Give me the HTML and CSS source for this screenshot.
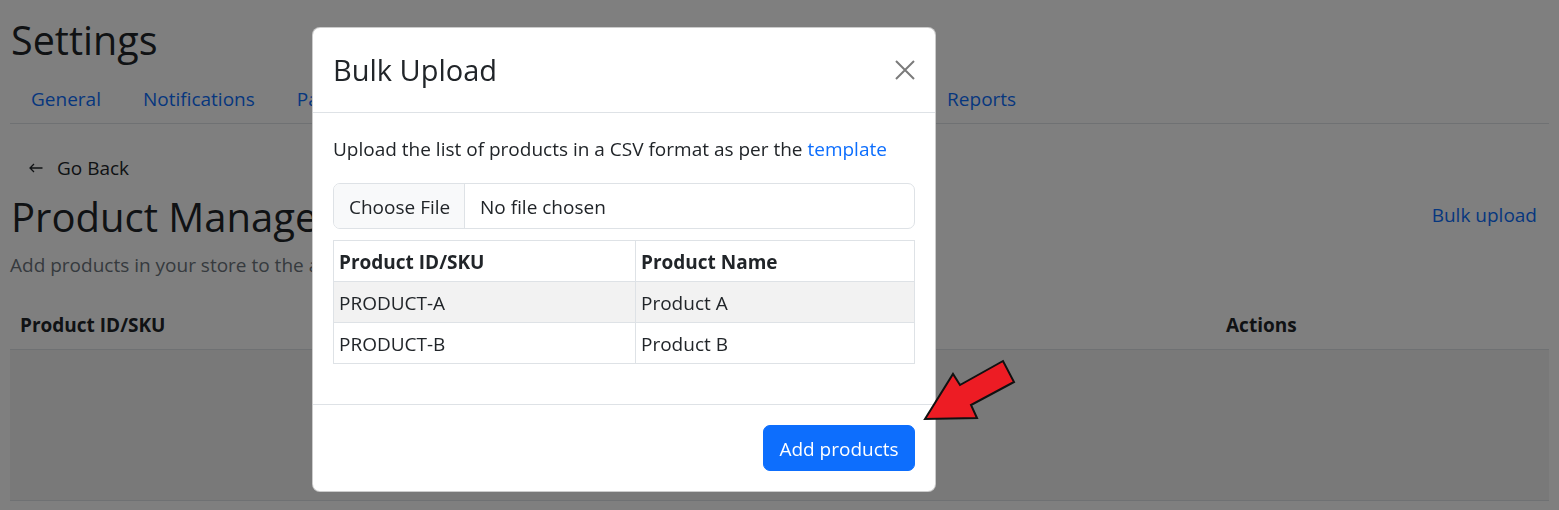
FILE: index.html
```html
<!DOCTYPE html>
<html lang="en">
<head>
<meta charset="utf-8">
<title>Settings – Product Management</title>
<link rel="stylesheet" href="styles.css">
</head>
<body>
<div class="page">
  <h1 class="page-title">Settings</h1>
  <nav class="tabs">
    <a class="tab" href="#">General</a>
    <a class="tab" href="#">Notifications</a>
    <a class="tab" href="#">Payments</a>
    <a class="tab" href="#">Products</a>
    <a class="tab" href="#">Customers</a>
    <a class="tab" href="#">Integrations</a>
    <a class="tab" href="#">Delivery</a>
    <a class="tab" href="#">Reports</a>
  </nav>

  <a class="back" href="#">
    <svg class="back-icon" width="14" height="10" viewBox="0 0 14 10" aria-hidden="true"><path d="M13.5 5H1M5 1L1 5l4 4" fill="none" stroke="#212529" stroke-width="1.3"/></svg>
    <span>Go Back</span>
  </a>

  <div class="heading-row">
    <h2 class="section-title">Product Management</h2>
    <a class="link-btn" href="#">Bulk upload</a>
  </div>
  <p class="muted">Add products in your store to the app to start tracking them</p>

  <table class="list">
    <colgroup><col class="c1"><col class="c3"></colgroup>
    <thead>
      <tr><th>Product ID/SKU</th><th>Actions</th></tr>
    </thead>
    <tbody>
      <tr class="empty-row"><td colspan="2"></td></tr>
    </tbody>
  </table>
</div>

<div class="backdrop"></div>

<div class="modal">
  <div class="modal-header">
    <h4 class="modal-title">Bulk Upload</h4>
    <button class="close" type="button" aria-label="Close">
      <svg width="20" height="20" viewBox="0 0 20 20" aria-hidden="true"><path d="M1 1L19 19M19 1L1 19" stroke="#7b7b7b" stroke-width="2"/></svg>
    </button>
  </div>
  <div class="modal-body">
    <p class="intro">Upload the list of products in a CSV format as per the <a href="#" class="blue">template</a></p>
    <div class="file-input">
      <span class="file-btn">Choose File</span>
      <span class="file-name">No file chosen</span>
    </div>
    <table class="sample">
      <colgroup><col class="s1"><col class="s2"></colgroup>
      <thead>
        <tr><th>Product ID/SKU</th><th>Product Name</th></tr>
      </thead>
      <tbody>
        <tr class="striped"><td>PRODUCT-A</td><td>Product A</td></tr>
        <tr><td>PRODUCT-B</td><td>Product B</td></tr>
      </tbody>
    </table>
  </div>
  <div class="modal-footer">
    <button class="primary" type="button">Add products</button>
  </div>
</div>

<svg class="pointer" width="1559" height="510" viewBox="0 0 1559 510" aria-hidden="true">
  <polygon points="925,419 953,374 960,385 1003,361 1014,382 971,405 977,418" fill="#ed1c24" stroke="#111" stroke-width="2" stroke-linejoin="miter"/>
</svg>
</body>
</html>
```

FILE: styles.css
```css
* { box-sizing: border-box; }

html, body {
  margin: 0;
  padding: 0;
  background: #fff;
  color: #212529;
  font-family: "Open Sans", "Noto Sans", sans-serif;
  font-size: 19px;
  line-height: 30px;
  overflow: hidden;
  height: 510px;
}

a { text-decoration: none; }

.page {
  padding: 0 10px;
}

.page-title {
  margin: 16px 0 9px;
  font-size: 39.5px;
  line-height: 48px;
  font-weight: 500;
  padding-left: 1px;
}

.tabs {
  display: flex;
  border-bottom: 1px solid #dee2e6;
}

.tab {
  padding: 11px 21px 9px;
  color: #0d6efd;
  line-height: 30px;
  white-space: nowrap;
}

.back {
  display: flex;
  align-items: center;
  gap: 14px;
  margin-top: 29px;
  padding-left: 19px;
  line-height: 30px;
  color: #212529;
  width: max-content;
}

.back-icon { display: block; }

.heading-row {
  display: flex;
  align-items: center;
  justify-content: space-between;
  margin-top: 10px;
}

.section-title {
  margin: 0;
  font-size: 40px;
  line-height: 48px;
  font-weight: 500;
  padding-left: 1px;
}

.link-btn {
  color: #0d6efd;
  padding: 5px 12px 9px;
  line-height: 30px;
}

.muted {
  margin: 9px 0 20px;
  color: #6c757d;
  line-height: 30px;
}

.list {
  width: 100%;
  border-collapse: collapse;
  table-layout: fixed;
}

.list .c3 { width: 333px; }

.list th {
  text-align: left;
  font-weight: 700;
  padding: 10px 10px 9px;
  line-height: 30px;
  border-bottom: 1px solid #dee2e6;
}

.empty-row td {
  height: 151px;
  background: #f2f2f2;
  border-bottom: 1px solid #dee2e6;
  padding: 0;
}

.backdrop {
  position: fixed;
  inset: 0;
  background: rgba(0, 0, 0, 0.5);
}

.modal {
  position: absolute;
  left: 312px;
  top: 27px;
  width: 624px;
  background: #fff;
  border: 1px solid rgba(0, 0, 0, 0.2);
  border-radius: 8px;
  display: flex;
  flex-direction: column;
}

.modal-header {
  display: flex;
  align-items: center;
  justify-content: space-between;
  padding: 19px 20px 20px;
  border-bottom: 1px solid #dee2e6;
}

.modal-title {
  margin: 0;
  font-size: 29px;
  line-height: 45px;
  font-weight: 500;
}

.close {
  border: 0;
  background: transparent;
  padding: 0;
  width: 20px;
  height: 20px;
  display: block;
  cursor: pointer;
}

.close svg { display: block; }

.modal-body {
  padding: 20px;
}

.intro {
  margin: 0 0 20px;
  line-height: 30px;
  padding-top: 1px;
  height: 30px;
}

.blue { color: #0d6efd; }

.file-input {
  display: flex;
  border: 1px solid #dee2e6;
  border-radius: 7px;
  overflow: hidden;
  line-height: 30px;
}

.file-btn {
  background: #f8f9fa;
  padding: 8px 15px 6px;
  border-right: 1px solid #dee2e6;
  width: 131px;
  white-space: nowrap;
}

.file-name {
  padding: 8px 15px 6px;
}

.sample {
  width: 100%;
  margin: 11px 0 20px;
  border-collapse: collapse;
  table-layout: fixed;
}

.sample .s1 { width: 302px; }

.sample th,
.sample td {
  border: 1px solid #dee2e6;
  padding: 6px 5px 4px;
  text-align: left;
  line-height: 30px;
}

.sample th { font-weight: 700; }

.sample .striped td { background: #f2f2f2; }

.modal-footer {
  display: flex;
  justify-content: flex-end;
  padding: 15px;
  border-top: 1px solid #dee2e6;
}

.primary {
  margin: 5px;
  background: #0d6efd;
  color: #fff;
  border: 1px solid #0d6efd;
  border-radius: 7px;
  padding: 8px 15px 6px;
  font-family: inherit;
  font-size: 19px;
  line-height: 30px;
  width: 152px;
}

.pointer {
  position: absolute;
  left: 0;
  top: 0;
  pointer-events: none;
}
```
